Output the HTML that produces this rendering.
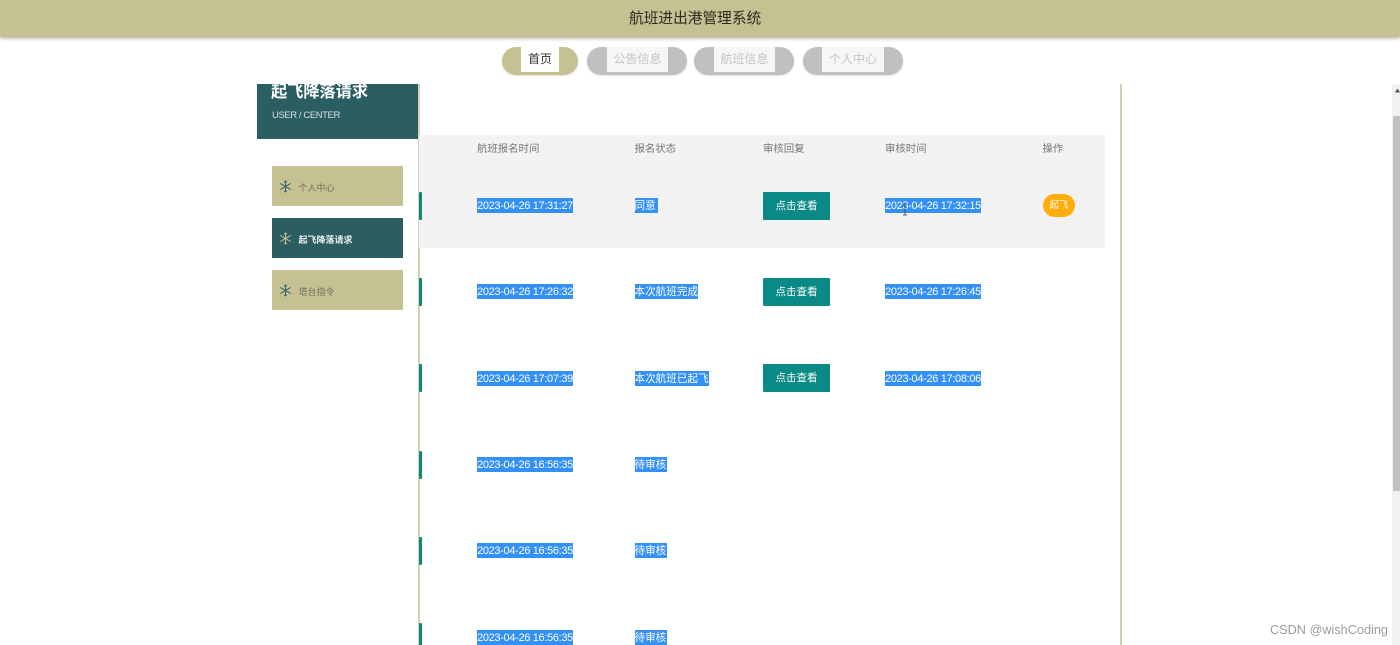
<!DOCTYPE html>
<html lang="zh"><head><meta charset="utf-8"><title>航班进出港管理系统</title>
<style>
html,body{margin:0;padding:0;background:#fff;width:1400px;height:645px;overflow:hidden}
#w{position:absolute;left:0;top:0;width:1400px;height:645px;overflow:hidden;background:#fff;filter:blur(.35px);font-family:"Liberation Sans","Noto Sans CJK SC",sans-serif}
.a{position:absolute;white-space:nowrap}
.hd{left:0;top:0;width:1400px;height:37px;background:#c6c192;box-shadow:0 1px 4px rgba(90,90,60,.55)}
.pill{height:28px;top:47px;border-radius:14px;background:#c0bfc1;box-shadow:0 1px 2px rgba(0,0,0,.12)}
.in{top:47px;height:25px;background:#f6f6f6;color:#c4c4c4;font-size:12px;line-height:24px;text-align:center}
.side{left:257px;top:84px;width:161px;height:55px;background:#2a5e62;overflow:hidden;color:#fff}
.m{left:272px;width:131px;height:40px;background:#c6c192;font-size:9px;color:#6f6f58;line-height:44px;text-indent:26.5px}
.ic{left:279px;width:13px;height:13px}
.th{top:143px;font-size:10.4px;line-height:14px;color:#777}
.s{background:#3390f6;color:#fff;font-size:10.6px;line-height:17px;height:15px}
.c1{left:477px;width:96px;text-align:center;font-size:11px;letter-spacing:-.33px}
.c2{left:634.5px}
.c4{left:885px;width:96px;text-align:center;font-size:11px;letter-spacing:-.33px}
.t{left:419px;width:3px;height:28px;background:#0e8a7c;border-radius:1px}
.b{left:763px;width:67px;height:28px;background:#0a8a87;border-radius:1px;color:#fff;font-size:10.5px;line-height:29px;text-align:center}
</style></head><body><div id="w">
<div class="a hd"></div>
<div class="a" style="left:629px;top:0;font-size:14.7px;line-height:38px;color:#2b2b20">航班进出港管理系统</div>

<div class="a pill" style="left:502px;width:76px;background:#c6c192"></div>
<div class="a in" style="left:521px;width:38px;background:#fff;color:#333">首页</div>
<div class="a pill" style="left:587px;width:100px"></div>
<div class="a in" style="left:607px;width:61px">公告信息</div>
<div class="a pill" style="left:694px;width:100px"></div>
<div class="a in" style="left:714px;width:61px">航班信息</div>
<div class="a pill" style="left:803px;width:100px"></div>
<div class="a in" style="left:822px;width:62px">个人中心</div>

<div class="a" style="left:418px;top:84px;width:1.5px;height:561px;background:#d4d1b0"></div>
<div class="a" style="left:1120px;top:84px;width:1.5px;height:561px;background:#d4d1b0"></div>

<div class="a side">
<div class="a" style="left:14px;top:-3px;font-size:16.2px;font-weight:bold;line-height:22px">起飞降落请求</div>
<div class="a" style="left:15px;top:24.5px;font-size:9.5px;letter-spacing:-.42px;line-height:14px;color:#d5e0e0">USER / CENTER</div>
</div>

<div class="a m" style="top:166px">个人中心</div>
<div class="a m" style="top:218px;background:#2a5e62;color:#f0f0f0;font-weight:bold">起飞降落请求</div>
<div class="a m" style="top:270px">塔台指令</div>
<svg class="a ic" style="top:179.5px" viewBox="0 0 12 12" fill="none" stroke="#2f6468" stroke-width=".9"><path d="M6 .5v11M1.2 3.2l9.6 5.6M10.8 3.2l-9.6 5.6M4.8 1.2L6 2.4 7.2 1.2M4.8 10.8L6 9.6l1.2 1.2"/></svg>
<svg class="a ic" style="top:231.5px" viewBox="0 0 12 12" fill="none" stroke="#c6c192" stroke-width=".9"><path d="M6 .5v11M1.2 3.2l9.6 5.6M10.8 3.2l-9.6 5.6M4.8 1.2L6 2.4 7.2 1.2M4.8 10.8L6 9.6l1.2 1.2"/></svg>
<svg class="a ic" style="top:283.5px" viewBox="0 0 12 12" fill="none" stroke="#2f6468" stroke-width=".9"><path d="M6 .5v11M1.2 3.2l9.6 5.6M10.8 3.2l-9.6 5.6M4.8 1.2L6 2.4 7.2 1.2M4.8 10.8L6 9.6l1.2 1.2"/></svg>

<div class="a" style="left:419px;top:135px;width:686px;height:113px;background:#f2f2f2"></div>
<div class="a th" style="left:477px">航班报名时间</div>
<div class="a th" style="left:634.5px">报名状态</div>
<div class="a th" style="left:763px">审核回复</div>
<div class="a th" style="left:885px">审核时间</div>
<div class="a th" style="left:1042.5px">操作</div>

<div class="a t" style="top:192px"></div>
<div class="a s c1" style="top:198px">2023-04-26 17:31:27</div>
<div class="a s c2" style="top:198px;padding-right:2px">同意</div>
<div class="a b" style="top:192px">点击查看</div>
<div class="a s c4" style="top:198px">2023-04-26 17:32:15</div>
<div class="a" style="left:1043px;top:194px;width:32px;height:23px;border-radius:12px;background:#ffad0d;color:#fff;font-size:9.5px;line-height:24px;text-align:center">起飞</div>
<svg class="a" style="left:902px;top:203px" width="6" height="13" viewBox="0 0 6 13" fill="none" stroke="#444" stroke-width=".8"><path d="M1 1h4M3 1v11M1 12h4"/></svg>

<div class="a t" style="top:278px"></div>
<div class="a s c1" style="top:284px">2023-04-26 17:26:32</div>
<div class="a s c2" style="top:284px">本次航班完成</div>
<div class="a b" style="top:278px">点击查看</div>
<div class="a s c4" style="top:284px">2023-04-26 17:26:45</div>

<div class="a t" style="top:364px"></div>
<div class="a s c1" style="top:371px">2023-04-26 17:07:39</div>
<div class="a s c2" style="top:371px">本次航班已起飞</div>
<div class="a b" style="top:364px">点击查看</div>
<div class="a s c4" style="top:371px">2023-04-26 17:08:06</div>

<div class="a t" style="top:451px"></div>
<div class="a s c1" style="top:457px">2023-04-26 16:56:35</div>
<div class="a s c2" style="top:457px;padding-right:1px">待审核</div>

<div class="a t" style="top:537px"></div>
<div class="a s c1" style="top:543px">2023-04-26 16:56:35</div>
<div class="a s c2" style="top:543px;padding-right:1px">待审核</div>

<div class="a t" style="top:623px"></div>
<div class="a s c1" style="top:630px">2023-04-26 16:56:35</div>
<div class="a s c2" style="top:630px;padding-right:1px">待审核</div>

<div class="a" style="left:1392px;top:84px;width:8px;height:561px;background:#f1f1f1"></div>
<div class="a" style="left:1393px;top:116px;width:7px;height:375px;background:#c1c1c1"></div>
<svg class="a" style="left:1395px;top:88px" width="5" height="5" viewBox="0 0 5 5"><path d="M2.5 0.5L5 4.5H0z" fill="#505050"/></svg>

<div class="a" style="left:1270px;top:622px;font-size:12.7px;line-height:16px;color:#9c9c9c">CSDN @wishCoding</div>
</div></body></html>
